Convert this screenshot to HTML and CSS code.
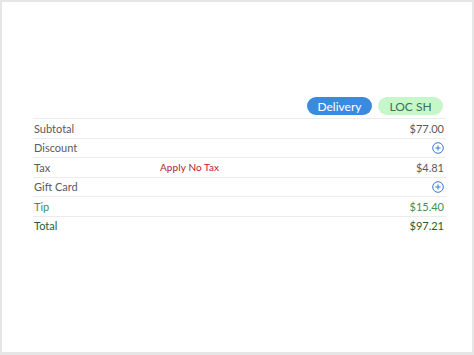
FILE: index.html
```html
<!DOCTYPE html>
<html>
<head>
<meta charset="utf-8">
<link rel="stylesheet" href="styles.css">
</head>
<body>
<div class="frame">
  <div class="panel">
    <div class="tags">
      <span class="pill pill-blue">Delivery</span>
      <span class="pill pill-green">LOC SH</span>
    </div>
    <div class="rows">
      <div class="row"><span class="label">Subtotal</span><span class="mid"></span><span class="val">$77.00</span></div>
      <div class="row"><span class="label">Discount</span><span class="mid"></span><span class="val"><svg class="plus" viewBox="0 0 12 12" width="12" height="12"><circle cx="6" cy="6" r="5.3" fill="none" stroke="#3a78d8" stroke-width="1"/><path d="M6 3.4V8.6M3.4 6H8.6" stroke="#3a78d8" stroke-width="1"/></svg></span></div>
      <div class="row"><span class="label">Tax</span><span class="mid red">Apply No Tax</span><span class="val">$4.81</span></div>
      <div class="row"><span class="label">Gift Card</span><span class="mid"></span><span class="val"><svg class="plus" viewBox="0 0 12 12" width="12" height="12"><circle cx="6" cy="6" r="5.3" fill="none" stroke="#3a78d8" stroke-width="1"/><path d="M6 3.4V8.6M3.4 6H8.6" stroke="#3a78d8" stroke-width="1"/></svg></span></div>
      <div class="row tip"><span class="label">Tip</span><span class="mid"></span><span class="val">$15.40</span></div>
      <div class="row total"><span class="label">Total</span><span class="mid"></span><span class="val">$97.21</span></div>
    </div>
  </div>
</div>
</body>
</html>
```
FILE: styles.css
```css
html, body {
  margin: 0;
  padding: 0;
  background: #e6e6e6;
}
body {
  width: 474px;
  height: 355px;
  font-family: Lato, "Noto Sans", sans-serif;
}
.frame {
  box-sizing: border-box;
  width: 474px;
  height: 355px;
  padding: 2px 2px 3px 2px;
}
.panel {
  background: #fff;
  height: 100%;
  box-sizing: border-box;
  padding: 95px 26px 0 31px;
}
.tags {
  display: flex;
  justify-content: flex-end;
  gap: 6px;
  padding-right: 3px;
  margin-bottom: 3px;
}
.pill {
  display: inline-flex;
  align-items: center;
  justify-content: center;
  width: 65px;
  height: 18px;
  border-radius: 9px;
  font-size: 12px;
}
.pill-blue {
  background: #3a8be0;
  color: #fff;
}
.pill-green {
  background: #c6f7c8;
  color: #3f6f56;
}
.rows {
  border-top: 1px solid #ececec;
}
.row {
  display: flex;
  align-items: center;
  height: 18.5px;
  border-bottom: 1px solid #ececec;
  font-size: 11px;
  color: #5a5a5a;
  padding: 0 2px 0 1px;
}
.row.total {
  border-bottom: none;
}
.label {
  width: 126px;
}
.mid {
  flex: 1;
}
.red {
  color: #b3202f;
  font-size: 10px;
  letter-spacing: 0.1px;
}
.val {
  text-align: right;
  display: flex;
  align-items: center;
  justify-content: flex-end;
}
.plus {
  display: block;
}
.tip {
  color: #3a9150;
}
.total {
  color: #1e5e34;
}
```
